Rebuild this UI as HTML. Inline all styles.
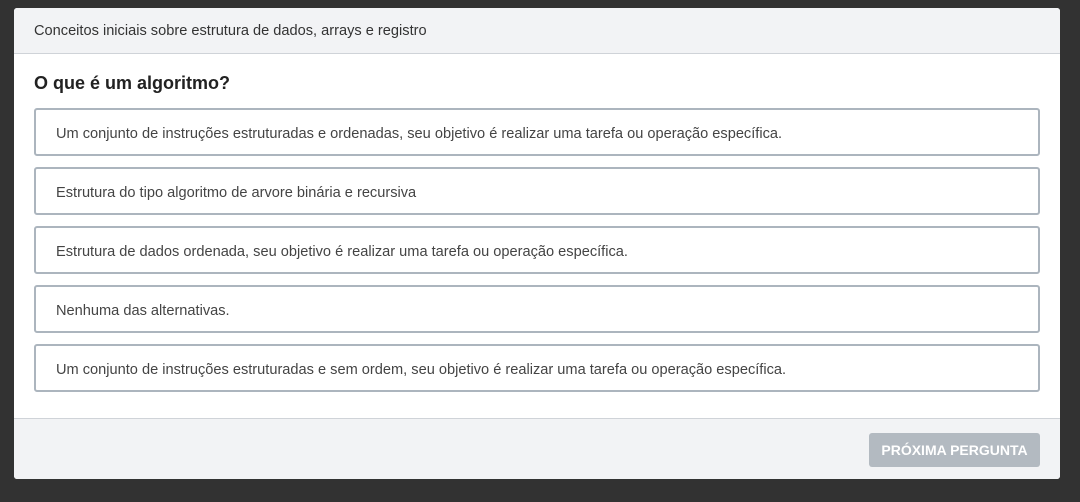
<!DOCTYPE html>
<html><head><style>
body{margin:0;width:1080px;height:502px;background:#323232;font-family:"Liberation Sans",sans-serif;position:relative;overflow:hidden}
.card{position:absolute;left:14px;top:8px;width:1046px;height:471px;background:#fff;border-radius:3px;overflow:hidden}
.hd{height:45px;background:#f2f3f5;border-bottom:1px solid #cfd3d8;font-size:14.6px;color:#333;line-height:47px;padding-left:20px}
h1{position:absolute;left:20px;top:65px;margin:0;font-size:18px;font-weight:bold;color:#222}
.opt{position:absolute;left:20px;width:982px;height:44px;border:2px solid #acb5be;border-radius:3px;font-size:14.6px;color:#444;line-height:48px;padding-left:20px;box-sizing:content-box;white-space:nowrap}
.ft{position:absolute;left:0;top:410px;width:100%;height:61px;background:#f2f3f5;border-top:1px solid #cfd3d8}
.btn{position:absolute;left:855px;top:14px;width:171px;height:34px;background:#b3bac1;border-radius:3px;color:#fff;font-weight:bold;font-size:14px;text-align:center;line-height:35px}
</style></head><body>
<div class="card">
<div class="hd">Conceitos iniciais sobre estrutura de dados, arrays e registro</div>
<h1>O que é um algoritmo?</h1>
<div class="opt" style="top:100px">Um conjunto de instruções estruturadas e ordenadas, seu objetivo é realizar uma tarefa ou operação específica.</div>
<div class="opt" style="top:159px">Estrutura do tipo algoritmo de arvore binária e recursiva</div>
<div class="opt" style="top:218px">Estrutura de dados ordenada, seu objetivo é realizar uma tarefa ou operação específica.</div>
<div class="opt" style="top:277px">Nenhuma das alternativas.</div>
<div class="opt" style="top:336px">Um conjunto de instruções estruturadas e sem ordem, seu objetivo é realizar uma tarefa ou operação específica.</div>
<div class="ft"><div class="btn">PRÓXIMA PERGUNTA</div></div>
</div>
</body></html>
